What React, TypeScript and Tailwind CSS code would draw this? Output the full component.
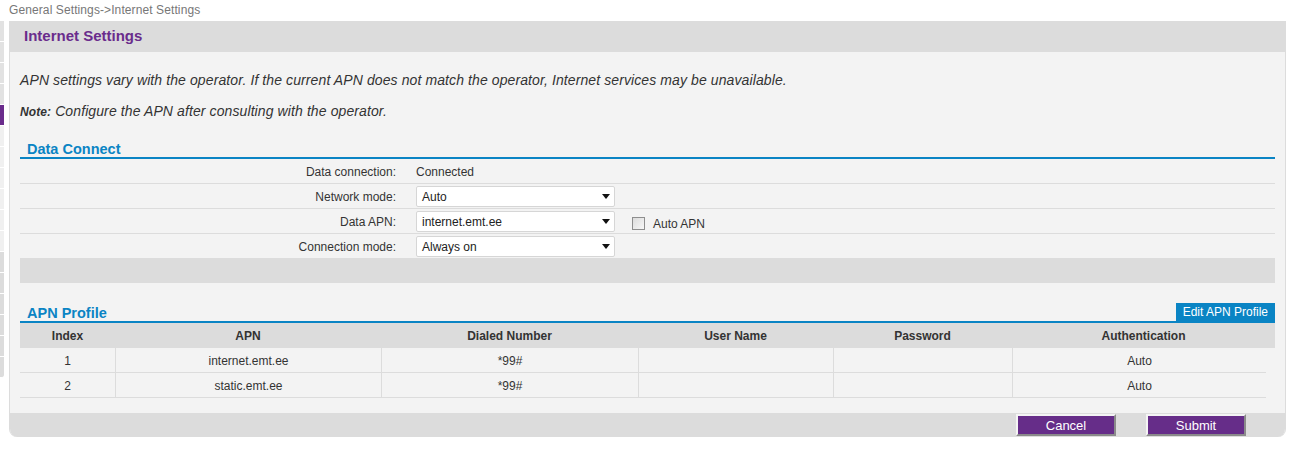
import type { ReactNode } from 'react';

const SIDE_ITEMS = [
  'bg-[#e2e2e2]', 'bg-[#e2e2e2]', 'bg-[#e2e2e2]', 'bg-[#e2e2e2]', 'bg-[#6a2c8c]',
  'bg-[#f0f0f0]', 'bg-[#f0f0f0]', 'bg-[#f0f0f0]', 'bg-[#f0f0f0]', 'bg-[#f0f0f0]',
  'bg-[#f0f0f0]', 'bg-[#dcdcdc]', 'bg-[#dcdcdc]', 'bg-[#dcdcdc]', 'bg-[#dcdcdc]',
  'bg-[#dcdcdc]', 'bg-[#dcdcdc]',
];

const HEAD_COLS = [
  { label: 'Index', w: 'w-[95px]' },
  { label: 'APN', w: 'w-[266px]' },
  { label: 'Dialed Number', w: 'w-[257px]' },
  { label: 'User Name', w: 'w-[195px]' },
  { label: 'Password', w: 'w-[179px]' },
  { label: 'Authentication', w: 'w-[263px]' },
];

const DATA_W = ['w-[95px]', 'w-[266px]', 'w-[257px]', 'w-[195px]', 'w-[179px]', 'w-[254px]'];

const PROFILES = [
  ['1', 'internet.emt.ee', '*99#', '', '', 'Auto'],
  ['2', 'static.emt.ee', '*99#', '', '', 'Auto'],
];

function Select({ value }: { value: string }) {
  return (
    <div className="w-[199px] h-[21px] bg-white border border-[#d6d6d6] rounded-[2px] flex items-center justify-between pl-[5px] pr-[4px] text-[12px] text-[#222]">
      <span className="pt-px">{value}</span>
      <svg width="8" height="5" viewBox="0 0 8 5">
        <path d="M0 0 H8 L4 5 Z" fill="#111" />
      </svg>
    </div>
  );
}

function FormRow({ label, children }: { label: string; children: ReactNode }) {
  return (
    <div className="flex items-center h-[25px] border-b border-[#dcdcdc] text-[12px] text-[#333]">
      <div className="w-[376px] text-right pt-px">{label}</div>
      <div className="pl-[20px] flex items-center">{children}</div>
    </div>
  );
}

function SectionTitle({ title, action }: { title: string; action?: string }) {
  return (
    <div className="flex items-end justify-between h-[20px] border-b-2 border-[#0a84c4]">
      <span className="pl-[7px] text-[14.5px] font-bold text-[#0a84c4] leading-[16px]">{title}</span>
      {action && (
        <button className="h-[18px] px-[7px] bg-[#0a84c4] text-white text-[12px] leading-[18px]">
          {action}
        </button>
      )}
    </div>
  );
}

const BTN =
  'w-[100px] h-[22px] bg-[#662d89] text-white text-[13px] border-2 border-t-[#f4f4f4] border-l-[#f4f4f4] border-b-[#8a8a8a] border-r-[#8a8a8a]';

export default function App() {
  return (
    <div className="flex w-[1291px] h-[473px] bg-white font-['Liberation_Sans',Arial,sans-serif] overflow-hidden">
      {/* remnant of the side menu */}
      <div className="w-[4px] flex flex-col pt-[21px]">
        {SIDE_ITEMS.map((c, i) => (
          <div key={i} className={`h-[21px] border-b border-white ${c} ${i === SIDE_ITEMS.length - 1 ? 'rounded-br-[3px]' : ''}`} />
        ))}
      </div>

      <div className="ml-[5px] w-[1277px] flex flex-col">
        <div className="h-[21px] text-[12px] text-[#777] leading-[20px] tracking-[0.1px]">
          General Settings-&gt;Internet Settings
        </div>

        <div className="border-x border-[#dcdcdc] rounded-b-[8px] overflow-hidden">
          <div className="h-[31px] bg-[#dcdcdc] flex items-center pl-[14px] text-[15px] font-bold text-[#6a2c8c]">
            Internet Settings
          </div>

          <div className="bg-[#f3f3f3] px-[10px] pb-[15px]">
            <p className="pt-[16px] leading-[24px] text-[14px] italic text-[#333] tracking-[0.1px]">
              APN settings vary with the operator. If the current APN does not match the operator, Internet services may be unavailable.
            </p>
            <p className="mt-[7px] leading-[24px] text-[14px] italic text-[#333] tracking-[0.1px]">
              <span className="text-[12px] font-bold">Note:</span> Configure the APN after consulting with the operator.
            </p>

            <div className="mt-[15px]">
              <SectionTitle title="Data Connect" />
            </div>
            <FormRow label="Data connection:">
              <span className="pt-px">Connected</span>
            </FormRow>
            <FormRow label="Network mode:">
              <Select value="Auto" />
            </FormRow>
            <FormRow label="Data APN:">
              <Select value="internet.emt.ee" />
              <span className="ml-[17px] mt-[4px] w-[13px] h-[13px] border border-[#8e8e8e] bg-gradient-to-br from-[#dcdcdc] to-[#f7f7f7]" />
              <span className="ml-[8px] mt-[5px]">Auto APN</span>
            </FormRow>
            <FormRow label="Connection mode:">
              <Select value="Always on" />
            </FormRow>
            <div className="h-[25px] bg-[#dcdcdc] -mt-px" />

            <div className="mt-[20px]">
              <SectionTitle title="APN Profile" action="Edit APN Profile" />
            </div>
            <div className="flex h-[25px] bg-[#dcdcdc] text-[12px] font-bold text-[#333] items-center">
              {HEAD_COLS.map((c) => (
                <div key={c.label} className={`${c.w} text-center`}>{c.label}</div>
              ))}
            </div>
            {PROFILES.map((row) => (
              <div key={row[0]} className="flex h-[25px] w-[1246px] border-b border-[#dcdcdc] text-[12px] text-[#333]">
                {row.map((cell, i) => (
                  <div
                    key={i}
                    className={`${DATA_W[i]} flex items-center justify-center pt-px ${i > 0 ? 'border-l border-[#dcdcdc]' : ''}`}
                  >
                    {cell}
                  </div>
                ))}
              </div>
            ))}
          </div>

          <div className="h-[24px] bg-[#dcdcdc] flex items-center justify-end gap-[30px] pr-[39px]">
            <button className={BTN}>Cancel</button>
            <button className={BTN}>Submit</button>
          </div>
        </div>
      </div>
    </div>
  );
}
